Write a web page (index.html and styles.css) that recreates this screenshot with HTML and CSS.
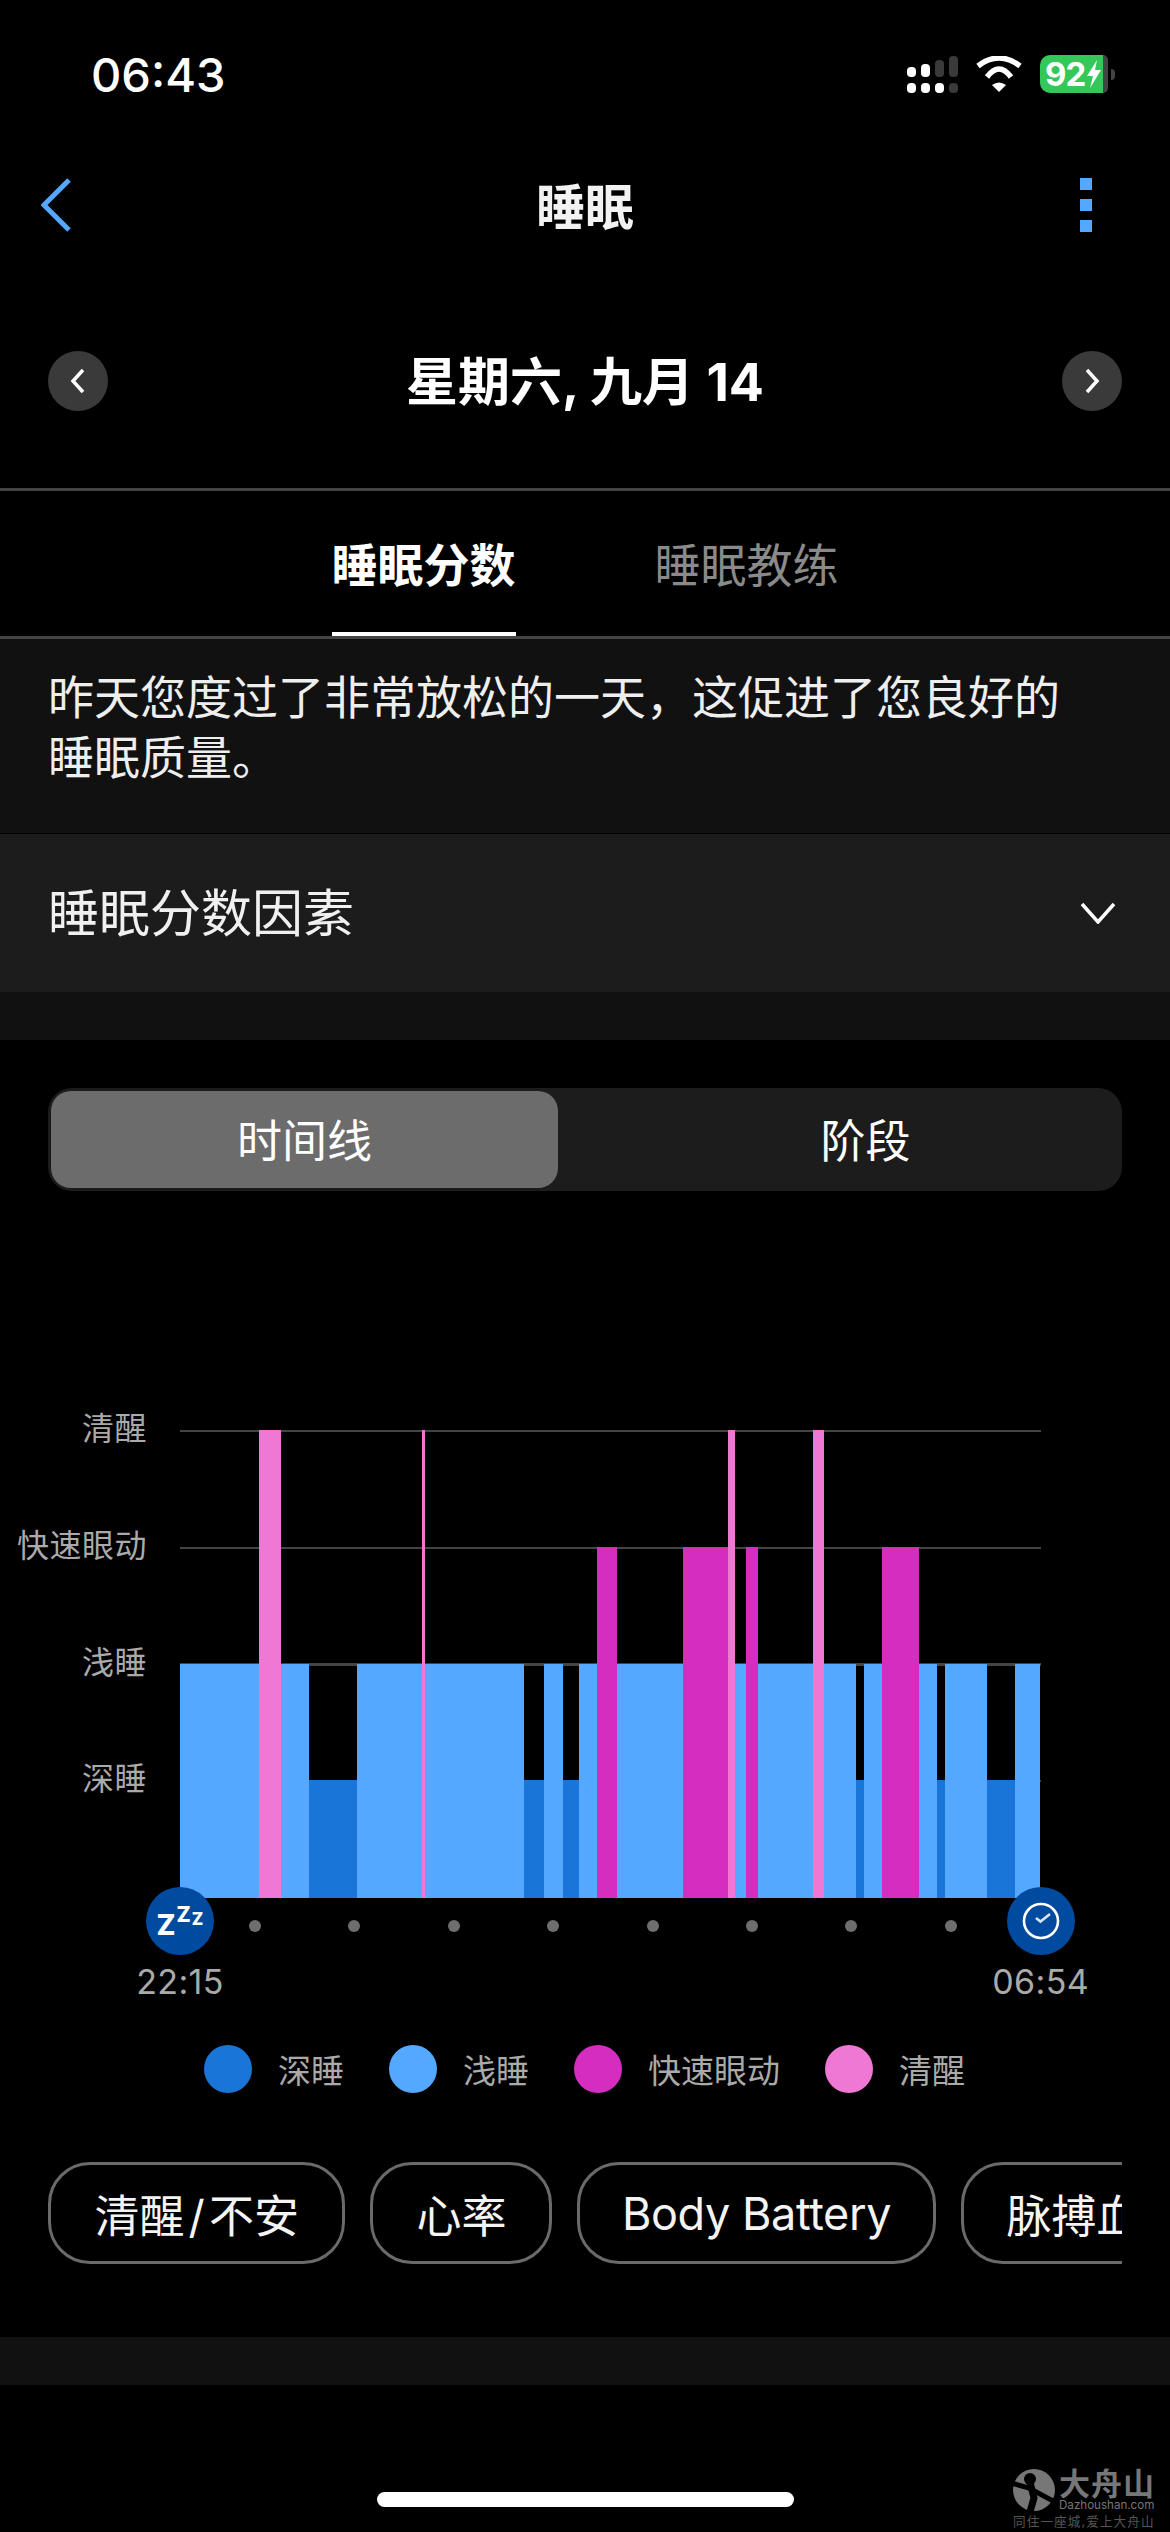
FILE: index.html
```html
<!DOCTYPE html>
<html lang="zh-CN">

<head>
    <meta charset="UTF-8">
    <meta name="viewport" content="width=device-width, initial-scale=1.0">
    <title>睡眠</title>
    <link rel="stylesheet" href="styles.css">
</head>

<body>
    <div class="status-bar">
        <span class="clock-text">06:43</span>
        <div class="status-icons">
            <div class="signal">
                <div class="signal-col"><i class="sig-top h1"></i><i class="sig-dot"></i></div>
                <div class="signal-col"><i class="sig-top h2"></i><i class="sig-dot"></i></div>
                <div class="signal-col"><i class="sig-top h3 off"></i><i class="sig-dot"></i></div>
                <div class="signal-col"><i class="sig-top h4 off"></i><i class="sig-dot off"></i></div>
            </div>
            <svg class="wifi" viewBox="0 0 48 36" width="48" height="36">
                <path d="M3 10 Q24 -6 45 10" fill="none" stroke="#fff" stroke-width="5.5" />
                <path d="M12 21 Q24 5 36 21" fill="none" stroke="#fff" stroke-width="5.5" />
                <path d="M17 29 Q24 24 31 29 L24 36 Z" fill="#fff" />
            </svg>
            <div class="battery">
                <div class="battery-level">
                    <span>92</span>
                    <svg viewBox="0 0 16 28" width="16" height="28">
                        <path d="M11 0 L1 16 H7 L4 28 L15 10 H9 Z" fill="#fff" />
                    </svg>
                </div>
                <div class="battery-rest"></div>
                <div class="battery-nub"></div>
            </div>
        </div>
    </div>

    <div class="nav-bar">
        <svg class="back-icon" viewBox="0 0 30 54" width="30" height="54">
            <polyline points="28,2 3,27 28,52" fill="none" stroke="#55a8ff" stroke-width="5" />
        </svg>
        <div class="nav-title">睡眠</div>
        <div class="more-icon"><i></i><i></i><i></i></div>
    </div>

    <div class="date-row">
        <div class="round-btn">
            <svg viewBox="0 0 16 26" width="16" height="26">
                <polyline points="13,2 3,13 13,24" fill="none" stroke="#fff" stroke-width="3.5" />
            </svg>
        </div>
        <div class="date-title">星期六, 九月 14</div>
        <div class="round-btn">
            <svg viewBox="0 0 16 26" width="16" height="26">
                <polyline points="3,2 13,13 3,24" fill="none" stroke="#fff" stroke-width="3.5" />
            </svg>
        </div>
    </div>

    <div class="tabs">
        <div class="tab active">睡眠分数</div>
        <div class="tab">睡眠教练</div>
    </div>

    <div class="summary">昨天您度过了非常放松的一天，这促进了您良好的睡眠质量。</div>

    <div class="factors">
        <span>睡眠分数因素</span>
        <svg viewBox="0 0 36 22" width="36" height="22">
            <polyline points="2,2 18,20 34,2" fill="none" stroke="#fff" stroke-width="3.5" />
        </svg>
    </div>
    <div class="band"></div>

    <div class="segment">
        <div class="segment-item selected">时间线</div>
        <div class="segment-item">阶段</div>
    </div>

    <div class="chart">
        <div class="y-labels">
            <div>清醒</div>
            <div>快速眼动</div>
            <div>浅睡</div>
            <div>深睡</div>
        </div>
        <div class="plot">
            <div class="bar light" style="width:79px"></div>
            <div class="bar awake" style="width:22px"></div>
            <div class="bar light" style="width:28px"></div>
            <div class="bar deep" style="width:48px"></div>
            <div class="bar light" style="width:65px"></div>
            <div class="bar awake" style="width:3px"></div>
            <div class="bar light" style="width:99px"></div>
            <div class="bar deep" style="width:20px"></div>
            <div class="bar light" style="width:19px"></div>
            <div class="bar deep" style="width:16px"></div>
            <div class="bar light" style="width:18px"></div>
            <div class="bar rem" style="width:20px"></div>
            <div class="bar light" style="width:66px"></div>
            <div class="bar rem" style="width:45px"></div>
            <div class="bar awake" style="width:7px"></div>
            <div class="bar light" style="width:11px"></div>
            <div class="bar rem" style="width:12px"></div>
            <div class="bar light" style="width:55px"></div>
            <div class="bar awake" style="width:11px"></div>
            <div class="bar light" style="width:32px"></div>
            <div class="bar deep" style="width:8px"></div>
            <div class="bar light" style="width:18px"></div>
            <div class="bar rem" style="width:37px"></div>
            <div class="bar light" style="width:18px"></div>
            <div class="bar deep" style="width:8px"></div>
            <div class="bar light" style="width:42px"></div>
            <div class="bar deep" style="width:28px"></div>
            <div class="bar light" style="width:25px"></div>
        </div>
    </div>

    <div class="axis">
        <div class="axis-end">
            <div class="axis-badge zzz"><span class="z1">Z</span><span class="z2">Z</span><span class="z3">Z</span></div>
            <div class="axis-time">22:15</div>
        </div>
        <div class="axis-dots">
            <i></i><i></i><i></i><i></i><i></i><i></i><i></i><i></i>
        </div>
        <div class="axis-end">
            <div class="axis-badge">
                <svg viewBox="0 0 38 38" width="38" height="38">
                    <circle cx="19" cy="19" r="17" fill="none" stroke="#fff" stroke-width="2.6" />
                    <polyline points="14,16 18.5,19.5 28,12" fill="none" stroke="#d8e4f2" stroke-width="2.6" />
                </svg>
            </div>
            <div class="axis-time">06:54</div>
        </div>
    </div>

    <div class="legend">
        <i class="legend-dot deep"></i><span class="legend-text">深睡</span>
        <i class="legend-dot light"></i><span class="legend-text">浅睡</span>
        <i class="legend-dot rem"></i><span class="legend-text">快速眼动</span>
        <i class="legend-dot awake"></i><span class="legend-text">清醒</span>
    </div>

    <div class="chips">
        <div class="chip wide">清醒&hairsp;/&hairsp;不安</div>
        <div class="chip">心率</div>
        <div class="chip latin">Body Battery</div>
        <div class="chip">脉搏血氧</div>
    </div>

    <div class="band bottom"></div>
    <div class="home-bar"></div>

    <div class="watermark">
        <div class="wm-top">
            <svg viewBox="0 0 44 44" width="44" height="44">
                <circle cx="23" cy="22" r="21" fill="#777" />
                <circle cx="19" cy="11" r="6" fill="#000" />
                <path d="M0 15 L18 20 L44 34" fill="none" stroke="#000" stroke-width="5" />
                <path d="M19 14 L23 30 L19 44" fill="none" stroke="#000" stroke-width="7" />
            </svg>
            <div class="wm-name">
                <b>大舟山</b>
                <span>Dazhoushan.com</span>
            </div>
        </div>
        <div class="wm-slogan">同住一座城,爱上大舟山</div>
    </div>
</body>

</html>
```

FILE: styles.css
```css
* {
    box-sizing: border-box;
}

html,
body {
    height: 2532px;
    overflow: hidden;
}

body {
    margin: 0;
    position: relative;
    background: #000;
    color: #fff;
    font-family: Inter, "Noto Sans CJK SC", sans-serif;
}

i {
    display: block;
}

/* status bar */
.status-bar {
    height: 148px;
    padding: 0 55px 0 91px;
    display: flex;
    align-items: center;
    justify-content: space-between;
}

.clock-text {
    font-size: 47px;
    font-weight: 500;
}

.status-icons {
    display: flex;
    align-items: center;
    gap: 17px;
}

.signal {
    display: flex;
    gap: 5px;
}

.signal-col {
    width: 9px;
    height: 37px;
    display: flex;
    flex-direction: column;
    justify-content: flex-end;
    gap: 6px;
}

.sig-top {
    border-radius: 4px;
    background: #fff;
}

.sig-dot {
    height: 10px;
    border-radius: 4px;
    background: #fff;
}

.sig-top.off,
.sig-dot.off {
    background: #3a3a3a;
}

.h1 {
    height: 10px;
}

.h2 {
    height: 13px;
}

.h3 {
    height: 17px;
}

.h4 {
    height: 21px;
}

.battery {
    display: flex;
    align-items: center;
    height: 38px;
}

.battery-level {
    width: 63px;
    height: 38px;
    padding-left: 5px;
    display: flex;
    align-items: center;
    gap: 1px;
    background: #34c759;
    border-radius: 10px 0 0 10px;
    font-size: 33px;
    font-weight: 700;
    letter-spacing: -1px;
}

.battery-rest {
    width: 5px;
    height: 38px;
    background: #444;
    border-radius: 0 5px 5px 0;
}

.battery-nub {
    width: 4px;
    height: 11px;
    margin-left: 3px;
    background: #444;
    border-radius: 0 4px 4px 0;
}

/* nav */
.nav-bar {
    height: 114px;
    padding: 0 41px;
    display: grid;
    grid-template-columns: 1fr auto 1fr;
    align-items: center;
}

.nav-title {
    padding-bottom: 3px;
    font-size: 49px;
    font-weight: 700;
    color: #f2f2f2;
}

.more-icon {
    justify-self: end;
    margin-right: 37px;
    display: flex;
    flex-direction: column;
    gap: 9px;
}

.more-icon i {
    width: 12px;
    height: 12px;
    background: #55a8ff;
}

.date-row {
    height: 226px;
    padding: 12px 48px 0;
    display: flex;
    align-items: center;
    justify-content: space-between;
}

.round-btn {
    width: 60px;
    height: 60px;
    border-radius: 50%;
    background: #3a3a3a;
    display: flex;
    align-items: center;
    justify-content: center;
}

.date-title {
    padding-bottom: 5px;
    font-size: 52px;
    font-weight: 700;
}

/* tabs */
.tabs {
    height: 151px;
    display: flex;
    justify-content: center;
    gap: 139px;
    border-top: 3px solid #444;
    border-bottom: 3px solid #444;
}

.tab {
    width: 184px;
    display: flex;
    align-items: center;
    justify-content: center;
    border-bottom: 4px solid transparent;
    font-size: 46px;
    color: #8a8a8a;
    white-space: nowrap;
}

.tab.active {
    border-bottom-color: #fff;
    color: #fff;
    font-weight: 700;
}

.summary {
    height: 195px;
    padding: 28px 90px 0 48px;
    background: #111;
    border-bottom: 1px solid #000;
    font-size: 46px;
    line-height: 60px;
    color: #eee;
}

.factors {
    height: 158px;
    padding: 0 54px 0 48px;
    display: flex;
    align-items: center;
    justify-content: space-between;
    background: #1c1c1c;
    font-size: 51px;
    color: #f0f0f0;
}

.factors span {
    padding-bottom: 6px;
}

.band {
    height: 48px;
    background: #111;
}

/* segmented control */
.segment {
    width: 1074px;
    height: 103px;
    margin: 48px 0 0 48px;
    padding: 3px;
    display: flex;
    background: #1c1c1c;
    border-radius: 24px;
}

.segment-item {
    flex: 1;
    display: flex;
    align-items: center;
    justify-content: center;
    padding: 0 0 3px 54px;
    border-radius: 20px;
    font-size: 45px;
}

.segment-item.selected {
    flex: none;
    width: 507px;
    padding-left: 0;
    background: #6c6c6c;
}

/* chart */
.chart {
    margin-top: 239px;
    display: flex;
    align-items: flex-start;
}

.y-labels {
    width: 147px;
    margin: -59px 33px 0 0;
    text-align: right;
    font-size: 32px;
    letter-spacing: .5px;
    color: #aaa;
    white-space: nowrap;
}

.y-labels div {
    height: 116.75px;
    line-height: 116.75px;
}

.plot {
    width: 861px;
    height: 468px;
    display: flex;
    align-items: flex-end;
    background: repeating-linear-gradient(to bottom, #444 0, #444 2px, transparent 2px, transparent 116.75px);
}

.bar {
    flex: none;
}

.bar.deep {
    height: 118px;
}

.bar.light {
    height: 234px;
}

.bar.rem {
    height: 351px;
}

.bar.awake {
    height: 468px;
}

.deep {
    background: #1976d8;
}

.light {
    background: #55a8ff;
}

.rem {
    background: #d42dc0;
}

.awake {
    background: #ef78d4;
}

/* axis under the chart */
.axis {
    position: relative;
    margin: -11px 0 0 146px;
    display: flex;
    align-items: flex-start;
}

.axis-end {
    width: 68px;
    display: flex;
    flex-direction: column;
    align-items: center;
}

.axis-badge {
    width: 68px;
    height: 68px;
    flex: none;
    border-radius: 50%;
    background: #004a9f;
    display: flex;
    align-items: center;
    justify-content: center;
}

.zzz {
    font-weight: 800;
    line-height: 1;
    gap: 1px;
}

.z1 {
    font-size: 28px;
    margin-top: 8px;
}

.z2 {
    font-size: 21px;
    margin-top: -14px;
}

.z3 {
    font-size: 17px;
    margin-top: -3px;
}

.axis-time {
    margin-top: 6px;
    font-size: 34px;
    line-height: 42px;
    letter-spacing: .4px;
    color: #aaa;
    white-space: nowrap;
}

.axis-dots {
    margin: 33px 50px 0 35px;
    display: flex;
    gap: 87.4px;
}

.axis-dots i {
    width: 12px;
    height: 12px;
    border-radius: 50%;
    background: #6e6e6e;
}

/* legend */
.legend {
    margin: 42px 0 0 204px;
    display: flex;
    align-items: center;
}

.legend-dot {
    width: 48px;
    height: 48px;
    margin-right: 26px;
    border-radius: 50%;
}

.legend-text {
    margin-right: 45px;
    font-size: 33px;
    color: #aaa;
}

/* chips */
.chips {
    width: 1074px;
    margin: 69px 0 0 48px;
    display: flex;
    gap: 25px;
    overflow: hidden;
}

.chip {
    flex: none;
    height: 102px;
    padding: 0 43px;
    display: flex;
    align-items: center;
    border: 3px solid #6a6a6a;
    border-radius: 42px;
    font-size: 45px;
    color: #f4f4f4;
    white-space: nowrap;
}

.chip.wide {
    padding: 0 43.5px;
}

.chip.latin {
    padding: 0 41.5px;
    letter-spacing: -.4px;
}

.band.bottom {
    margin-top: 73px;
}

.home-bar {
    width: 417px;
    height: 15px;
    margin: 107px 0 0 377px;
    border-radius: 8px;
    background: #fff;
}

/* watermark sits over the page corner */
.watermark {
    position: absolute;
    left: 1011px;
    top: 2468px;
    color: #777;
}

.wm-top {
    display: flex;
    gap: 4px;
}

.wm-name {
    display: flex;
    flex-direction: column;
}

.wm-name b {
    font-size: 31px;
    line-height: 32px;
    letter-spacing: 1px;
    white-space: nowrap;
}

.wm-name span {
    font-size: 11.6px;
    line-height: 10px;
}

.wm-slogan {
    margin: 3px 0 0 2px;
    font-size: 12.6px;
    line-height: 14px;
    letter-spacing: 1.1px;
    color: #555;
    white-space: nowrap;
}
```
